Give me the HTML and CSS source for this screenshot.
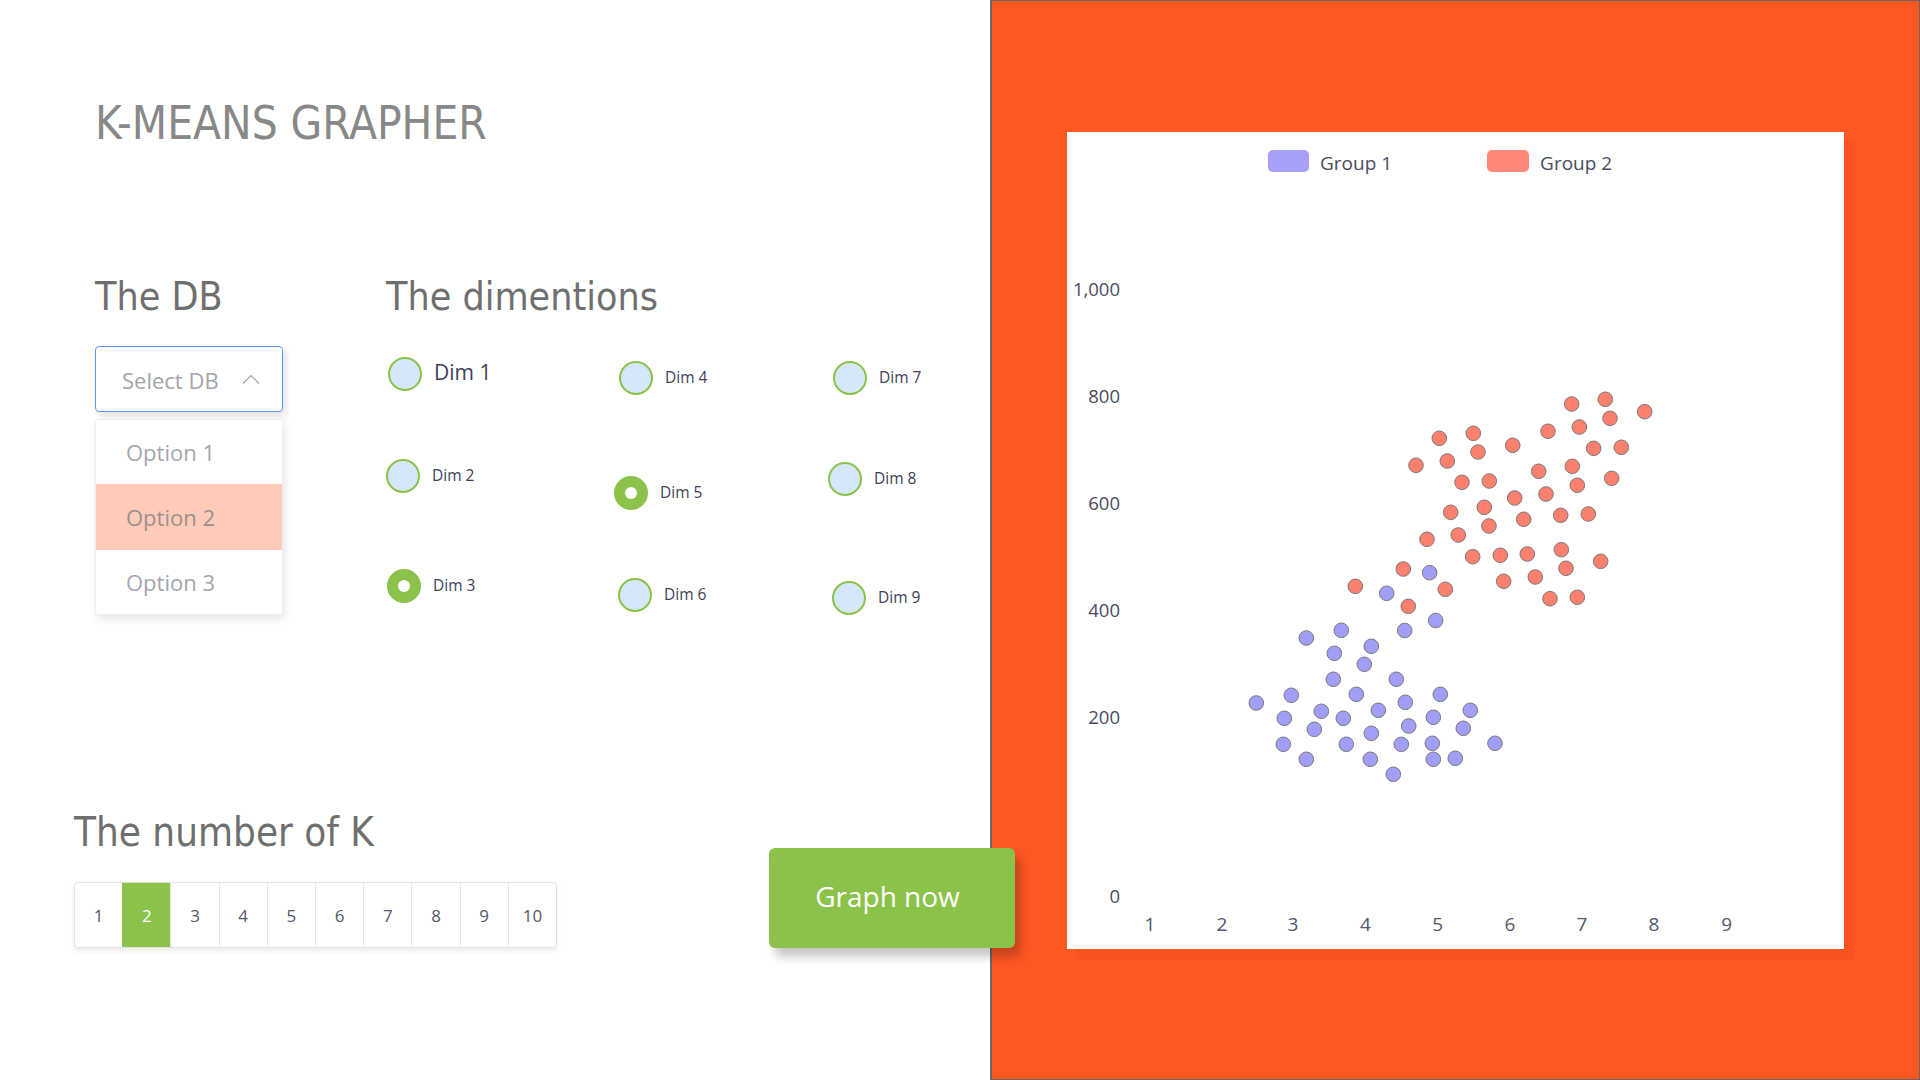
FILE: index.html
```html
<!DOCTYPE html>
<html lang="en">
<head>
<meta charset="utf-8">
<title>K-Means Grapher</title>
<link rel="stylesheet" href="styles.css">
</head>
<body>
<div class="app">
  <main class="left">
    <h1 class="title">K-MEANS GRAPHER</h1>

    <div class="config">
      <section class="db">
        <h2 class="heading">The DB</h2>
        <div class="select">
          <span class="select-text">Select DB</span>
          <svg class="chevron" width="18" height="10" viewBox="0 0 18 10"><polyline points="1,9.5 9,1.5 17,9.5" fill="none" stroke="#a3a3ab" stroke-width="1.2"/></svg>
        </div>
        <ul class="menu">
          <li class="menu-item">Option 1</li>
          <li class="menu-item menu-item-active">Option 2</li>
          <li class="menu-item">Option 3</li>
        </ul>
      </section>

      <section class="dims">
        <h2 class="heading">The dimentions</h2>
        <div class="dim-grid">
          <div class="dim-col dim-col-1">
            <label class="dim dim-1"><span class="radio"></span><span class="dim-label dim-label-big">Dim 1</span></label>
            <label class="dim dim-2"><span class="radio"></span><span class="dim-label">Dim 2</span></label>
            <label class="dim dim-3"><span class="radio radio-checked"></span><span class="dim-label">Dim 3</span></label>
          </div>
          <div class="dim-col dim-col-2">
            <label class="dim dim-4"><span class="radio"></span><span class="dim-label">Dim 4</span></label>
            <label class="dim dim-5"><span class="radio radio-checked"></span><span class="dim-label">Dim 5</span></label>
            <label class="dim dim-6"><span class="radio"></span><span class="dim-label">Dim 6</span></label>
          </div>
          <div class="dim-col dim-col-3">
            <label class="dim dim-7"><span class="radio"></span><span class="dim-label">Dim 7</span></label>
            <label class="dim dim-8"><span class="radio"></span><span class="dim-label">Dim 8</span></label>
            <label class="dim dim-9"><span class="radio"></span><span class="dim-label">Dim 9</span></label>
          </div>
        </div>
      </section>
    </div>

    <div class="bottom">
      <section class="kpick">
        <h2 class="heading heading-k">The number of K</h2>
        <div class="pager">
          <span class="page">1</span>
          <span class="page page-active">2</span>
          <span class="page">3</span>
          <span class="page">4</span>
          <span class="page">5</span>
          <span class="page">6</span>
          <span class="page">7</span>
          <span class="page">8</span>
          <span class="page">9</span>
          <span class="page">10</span>
        </div>
      </section>
      <button class="graph-btn">Graph now</button>
    </div>
  </main>

  <aside class="right">
    <div class="chart">
      <div class="legend">
        <div class="legend-item legend-item-1"><span class="swatch swatch-blue"></span><span class="legend-label">Group 1</span></div>
        <div class="legend-item"><span class="swatch swatch-red"></span><span class="legend-label">Group 2</span></div>
      </div>
      <svg class="plot" width="777" height="757" viewBox="0 0 777 757">
        <g transform="translate(-1067,-192)">
          <g class="ylabels">
            <text x="1120" y="296">1,000</text>
            <text x="1120" y="402.5">800</text>
            <text x="1120" y="509.5">600</text>
            <text x="1120" y="616.5">400</text>
            <text x="1120" y="723.5">200</text>
            <text x="1120" y="903">0</text>
          </g>
          <g class="xlabels">
            <text x="1150" y="931">1</text>
            <text x="1222" y="931">2</text>
            <text x="1293" y="931">3</text>
            <text x="1365.5" y="931">4</text>
            <text x="1437.6" y="931">5</text>
            <text x="1510" y="931">6</text>
            <text x="1582" y="931">7</text>
            <text x="1654" y="931">8</text>
            <text x="1726.6" y="931">9</text>
          </g>
          <g class="pts pts-red">
            <circle cx="1571.7" cy="404" r="7.3"/>
            <circle cx="1605.3" cy="399.3" r="7.3"/>
            <circle cx="1644.7" cy="411.7" r="7.3"/>
            <circle cx="1610" cy="418.3" r="7.3"/>
            <circle cx="1579.3" cy="427" r="7.3"/>
            <circle cx="1548" cy="431.3" r="7.3"/>
            <circle cx="1439.3" cy="438.3" r="7.3"/>
            <circle cx="1473.3" cy="433.3" r="7.3"/>
            <circle cx="1512.7" cy="445.3" r="7.3"/>
            <circle cx="1593.7" cy="448.3" r="7.3"/>
            <circle cx="1621.3" cy="447.3" r="7.3"/>
            <circle cx="1478" cy="452" r="7.3"/>
            <circle cx="1447.3" cy="461" r="7.3"/>
            <circle cx="1416" cy="465.3" r="7.3"/>
            <circle cx="1538.7" cy="471.3" r="7.3"/>
            <circle cx="1572.3" cy="466.3" r="7.3"/>
            <circle cx="1611.7" cy="478.3" r="7.3"/>
            <circle cx="1577.3" cy="485.3" r="7.3"/>
            <circle cx="1462" cy="482.3" r="7.3"/>
            <circle cx="1489.3" cy="481" r="7.3"/>
            <circle cx="1546" cy="494" r="7.3"/>
            <circle cx="1514.7" cy="498" r="7.3"/>
            <circle cx="1450.7" cy="512.3" r="7.3"/>
            <circle cx="1484.3" cy="507.3" r="7.3"/>
            <circle cx="1489" cy="526" r="7.3"/>
            <circle cx="1523.7" cy="519.3" r="7.3"/>
            <circle cx="1560.7" cy="515.3" r="7.3"/>
            <circle cx="1588.3" cy="514" r="7.3"/>
            <circle cx="1427" cy="539.3" r="7.3"/>
            <circle cx="1458.3" cy="535" r="7.3"/>
            <circle cx="1472.7" cy="556.7" r="7.3"/>
            <circle cx="1500.3" cy="555.3" r="7.3"/>
            <circle cx="1527.3" cy="554" r="7.3"/>
            <circle cx="1561.3" cy="549.7" r="7.3"/>
            <circle cx="1566" cy="568.3" r="7.3"/>
            <circle cx="1600.7" cy="561.3" r="7.3"/>
            <circle cx="1503.7" cy="581.3" r="7.3"/>
            <circle cx="1535.3" cy="577" r="7.3"/>
            <circle cx="1550" cy="598.7" r="7.3"/>
            <circle cx="1577.3" cy="597.3" r="7.3"/>
            <circle cx="1403.3" cy="569" r="7.3"/>
            <circle cx="1355.3" cy="586.3" r="7.3"/>
            <circle cx="1445.3" cy="589.3" r="7.3"/>
            <circle cx="1408.3" cy="606.3" r="7.3"/>
          </g>
          <g class="pts pts-blue">
            <circle cx="1429.7" cy="572.7" r="7.3"/>
            <circle cx="1386.7" cy="593.3" r="7.3"/>
            <circle cx="1435.7" cy="620.5" r="7.3"/>
            <circle cx="1404.7" cy="630.5" r="7.3"/>
            <circle cx="1341.3" cy="630.3" r="7.3"/>
            <circle cx="1306.3" cy="638" r="7.3"/>
            <circle cx="1371.3" cy="646.3" r="7.3"/>
            <circle cx="1334.3" cy="653.3" r="7.3"/>
            <circle cx="1364.3" cy="664.3" r="7.3"/>
            <circle cx="1333.3" cy="679.3" r="7.3"/>
            <circle cx="1396.3" cy="679.3" r="7.3"/>
            <circle cx="1291.3" cy="695.3" r="7.3"/>
            <circle cx="1356.3" cy="694.3" r="7.3"/>
            <circle cx="1440.3" cy="694.3" r="7.3"/>
            <circle cx="1256.3" cy="703" r="7.3"/>
            <circle cx="1405.3" cy="702.3" r="7.3"/>
            <circle cx="1321.3" cy="711.3" r="7.3"/>
            <circle cx="1378.3" cy="710.3" r="7.3"/>
            <circle cx="1470.3" cy="710.3" r="7.3"/>
            <circle cx="1284.3" cy="718.3" r="7.3"/>
            <circle cx="1343.3" cy="718.3" r="7.3"/>
            <circle cx="1433.3" cy="717.3" r="7.3"/>
            <circle cx="1314.3" cy="729.3" r="7.3"/>
            <circle cx="1408.7" cy="726" r="7.3"/>
            <circle cx="1463.3" cy="728.3" r="7.3"/>
            <circle cx="1371.3" cy="733.3" r="7.3"/>
            <circle cx="1283.3" cy="744.3" r="7.3"/>
            <circle cx="1346.3" cy="744.3" r="7.3"/>
            <circle cx="1401.3" cy="744.3" r="7.3"/>
            <circle cx="1432.3" cy="743.3" r="7.3"/>
            <circle cx="1495" cy="743.3" r="7.3"/>
            <circle cx="1306.3" cy="759.3" r="7.3"/>
            <circle cx="1370.3" cy="759.3" r="7.3"/>
            <circle cx="1433.3" cy="759.3" r="7.3"/>
            <circle cx="1455.3" cy="758.3" r="7.3"/>
            <circle cx="1393.3" cy="774.3" r="7.3"/>
          </g>
        </g>
      </svg>
    </div>
  </aside>
</div>
</body>
</html>
```

FILE: styles.css
```css
* { box-sizing: border-box; }

html, body {
  margin: 0;
  padding: 0;
  background: #ffffff;
}

body {
  font-family: "Open Sans", "Noto Sans", sans-serif;
  width: 1920px;
  height: 1080px;
  overflow: hidden;
}

.app {
  display: flex;
  width: 1920px;
  height: 1080px;
}

/* ---------- left panel ---------- */
.left {
  width: 990px;
  flex: 0 0 990px;
  height: 1080px;
  display: flex;
  flex-direction: column;
  position: relative;
  z-index: 1;
}

.title {
  margin: 0;
  padding: 101px 0 0 95px;
  font-family: "DejaVu Sans Condensed", "DejaVu Sans", sans-serif;
  font-stretch: condensed;
  font-weight: normal;
  font-size: 45.5px;
  line-height: 46px;
  color: #888888;
  letter-spacing: 0;
}

.heading {
  margin: 0;
  font-family: "DejaVu Sans Condensed", "DejaVu Sans", sans-serif;
  font-stretch: condensed;
  font-weight: normal;
  font-size: 39px;
  line-height: 39px;
  color: #6f6f6f;
  white-space: nowrap;
}

.heading-k {
  font-size: 40px;
  line-height: 40px;
}

.config {
  display: flex;
  margin-top: 130px;
}

.db {
  width: 291px;
  margin-left: 95px;
}

.select {
  margin-top: 30px;
  width: 188px;
  height: 66px;
  border: 1px solid #5a9bf6;
  border-radius: 4px;
  background: #fff;
  box-shadow: 3px 4px 7px rgba(0, 0, 0, 0.12);
  display: flex;
  align-items: center;
  justify-content: space-between;
  padding: 2px 22px 0 26px;
}

.select-text {
  font-size: 22px;
  color: #a3a3ab;
}

.chevron {
  display: block;
  margin-top: -2px;
}

.menu {
  list-style: none;
  margin: 7px 0 0 0;
  padding: 0;
  width: 188px;
  border: 1px solid #eceef3;
  border-radius: 3px;
  background: #fff;
  box-shadow: 2px 4px 8px rgba(0, 0, 0, 0.1);
}

.menu-item {
  height: 64px;
  display: flex;
  align-items: center;
  padding-left: 30px;
  font-size: 22px;
  color: #a6a6ae;
}

.menu-item-active {
  height: 66px;
  background: #ffcbb8;
  color: #9c908d;
}

/* dimensions */
.dims {
  flex: 1;
}

.dim-grid {
  display: flex;
}

.dim-col {
  display: flex;
  flex-direction: column;
  align-items: flex-start;
}

.dim-col-1 { width: 228px; }
.dim-col-2 { width: 214px; }
.dim-col-3 { width: 150px; }

.dim {
  display: flex;
  align-items: center;
  gap: 12px;
  height: 34px;
  cursor: pointer;
}

.radio {
  width: 34px;
  height: 34px;
  flex: 0 0 34px;
  border-radius: 50%;
  border: 2px solid #8bc34a;
  background: #d6e6fb;
  display: flex;
  align-items: center;
  justify-content: center;
}

.radio-checked {
  background: #8bc34a;
}

.radio-checked::after {
  content: "";
  width: 12px;
  height: 12px;
  border-radius: 50%;
  background: #ffffff;
}

.dim-label {
  font-size: 15.5px;
  color: #404058;
  white-space: nowrap;
  margin-top: -2px;
}

.dim-label-big {
  font-size: 21px;
  margin-top: -5px;
}

.dim-1 { margin-top: 41px; margin-left: 2px; }
.dim-2 { margin-top: 68px; margin-left: 0; }
.dim-3 { margin-top: 76px; margin-left: 1px; }
.dim-4 { margin-top: 45px; margin-left: 5px; }
.dim-5 { margin-top: 81px; margin-left: 0; }
.dim-6 { margin-top: 68px; margin-left: 4px; }
.dim-7 { margin-top: 45px; margin-left: 5px; }
.dim-8 { margin-top: 67px; margin-left: 0; }
.dim-9 { margin-top: 85px; margin-left: 4px; }

/* bottom row */
.bottom {
  margin-top: auto;
  margin-bottom: 132px;
  display: flex;
  align-items: flex-end;
}

.kpick {
  margin-left: 74px;
  flex: 0 0 auto;
}

.pager {
  margin-top: 30px;
  width: 483px;
  height: 66px;
  display: flex;
  border: 1px solid #dfe2ea;
  border-radius: 4px;
  background: #fff;
  box-shadow: 0 3px 5px rgba(0, 0, 0, 0.08);
  overflow: hidden;
}

.page {
  flex: 1;
  display: flex;
  align-items: center;
  justify-content: center;
  font-size: 17px;
  color: #55586a;
  border-left: 1px solid #e3e5ec;
}

.page:first-child {
  border-left: none;
}

.page-active {
  background: #8bc34a;
  color: #ffffff;
  border-left-color: #8bc34a;
}

.graph-btn {
  flex: 0 0 246px;
  margin-left: 212px;
  width: 246px;
  height: 100px;
  border: none;
  border-radius: 6px;
  background: #8bc34a;
  color: #ffffff;
  font-family: "Open Sans", "Noto Sans", sans-serif;
  font-size: 28px;
  padding: 0 9px 4px 0;
  box-shadow: 6px 9px 10px rgba(0, 0, 0, 0.22);
  cursor: pointer;
  position: relative;
  z-index: 2;
}

/* ---------- right panel ---------- */
.right {
  flex: 1;
  height: 1080px;
  background: #fe5722;
  border-top: 1px solid #66686a;
  border-right: 1px solid #66686a;
  border-bottom: 1px solid #66686a;
  border-left: 2px solid #66686a;
  padding: 131px 0 0 75px;
}

.chart {
  width: 777px;
  height: 817px;
  background: #ffffff;
  box-shadow: 10px 10px 1px rgba(120, 30, 0, 0.06);
}

.legend {
  height: 60px;
  display: flex;
  align-items: flex-start;
  padding: 16px 0 0 201px;
}

.legend-item {
  display: flex;
  align-items: center;
  gap: 11px;
}

.legend-item-1 {
  margin-right: 95px;
}

.swatch {
  width: 41px;
  height: 22px;
  border-radius: 5px;
  display: block;
}

.swatch-blue { background: #a5a0f8; }
.swatch-red { background: #ff877a; width: 42px; }

.legend-label {
  font-size: 19px;
  color: #4b4b5f;
  line-height: 22px;
  margin-top: 4px;
}

.plot {
  display: block;
}

.ylabels text {
  font-family: "Open Sans", "Noto Sans", sans-serif;
  font-size: 18.5px;
  fill: #4b4b60;
  text-anchor: end;
}

.xlabels text {
  font-family: "Open Sans", "Noto Sans", sans-serif;
  font-size: 19px;
  fill: #55566a;
  text-anchor: middle;
}

.pts circle {
  stroke: #7a7a7a;
  stroke-width: 1;
}

.pts-red circle { fill: #fc806e; }
.pts-blue circle { fill: #a19ef8; }
```
